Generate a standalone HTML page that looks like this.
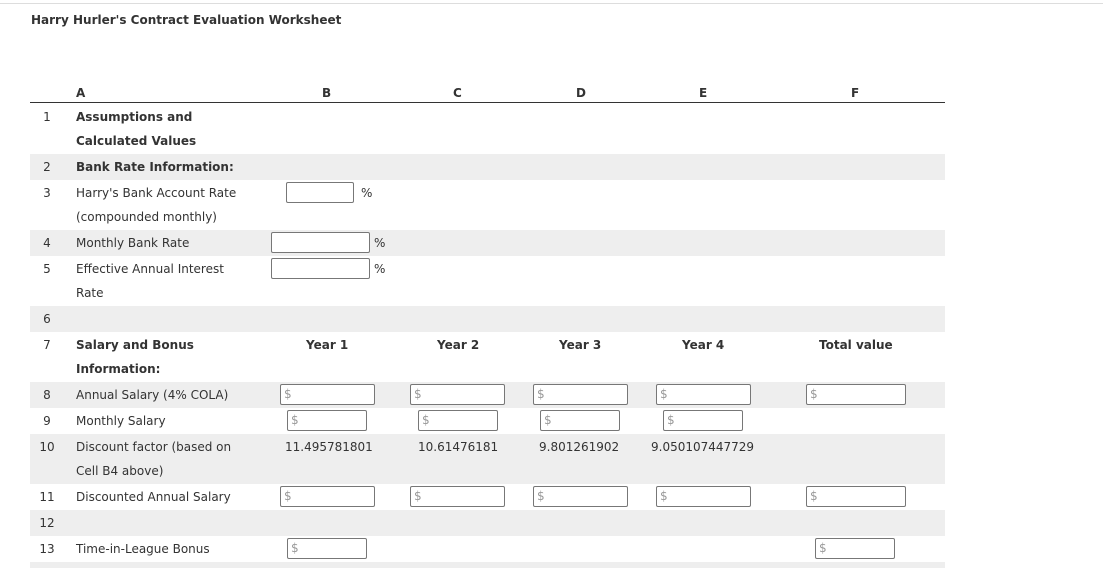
<!DOCTYPE html>
<html><head><style>
body{margin:0;width:1103px;height:567px;background:#fff;position:relative;overflow:hidden;font-family:"DejaVu Sans",Verdana,sans-serif;font-size:12px;color:#333}
.a{position:absolute;white-space:nowrap;margin-top:2px}
.b{font-weight:bold}
.bg{position:absolute;left:30px;width:915px;background:#eee}
.in{position:absolute;border:1px solid #777;border-radius:2px;background:#fff;box-sizing:border-box;height:21px}
.d{color:#999;font-size:12px;position:absolute;left:3px;top:2px}
.n{position:absolute;width:30px;left:32px;text-align:center;margin-top:2px}
</style></head><body>
<div style="position:absolute;left:0;top:3px;width:1103px;height:1px;background:#ddd"></div>
<div class="a b" style="left:31px;top:11px;font-size:12px">Harry Hurler's Contract Evaluation Worksheet</div>
<div class="bg" style="top:154px;height:26px"></div>
<div class="bg" style="top:230px;height:26px"></div>
<div class="bg" style="top:306px;height:26px"></div>
<div class="bg" style="top:382px;height:26px"></div>
<div class="bg" style="top:434px;height:50px"></div>
<div class="bg" style="top:510px;height:26px"></div>
<div class="bg" style="top:562px;height:6px"></div>
<div style="position:absolute;left:30px;top:102px;width:915px;height:1px;background:#333"></div>
<div class="a b" style="left:76px;top:84px;font-size:12px">A</div>
<div class="a b" style="left:322px;top:84px;font-size:12px">B</div>
<div class="a b" style="left:453px;top:84px;font-size:12px">C</div>
<div class="a b" style="left:576px;top:84px;font-size:12px">D</div>
<div class="a b" style="left:699px;top:84px;font-size:12px">E</div>
<div class="a b" style="left:851px;top:84px;font-size:12px">F</div>

<div class="n" style="top:108px">1</div><div class="a b" style="left:76px;top:108px">Assumptions and</div><div class="a b" style="left:76px;top:132px">Calculated Values</div>
<div class="n" style="top:158px">2</div><div class="a b" style="left:76px;top:158px">Bank Rate Information:</div>
<div class="n" style="top:184px">3</div><div class="a" style="left:76px;top:184px">Harry's Bank Account Rate</div><div class="a" style="left:76px;top:208px">(compounded monthly)</div>
<div class="in" style="left:286px;top:182px;width:68px"></div><div class="a" style="left:361px;top:184px">%</div>
<div class="n" style="top:234px">4</div><div class="a" style="left:76px;top:234px">Monthly Bank Rate</div>
<div class="in" style="left:271px;top:232px;width:99px"></div><div class="a" style="left:374px;top:234px">%</div>
<div class="n" style="top:260px">5</div><div class="a" style="left:76px;top:260px">Effective Annual Interest</div><div class="a" style="left:76px;top:284px">Rate</div>
<div class="in" style="left:271px;top:258px;width:99px"></div><div class="a" style="left:374px;top:260px">%</div>
<div class="n" style="top:310px">6</div>
<div class="n" style="top:336px">7</div><div class="a b" style="left:76px;top:336px">Salary and Bonus</div><div class="a b" style="left:76px;top:360px">Information:</div>
<div class="a b" style="left:306px;top:336px">Year 1</div><div class="a b" style="left:437px;top:336px">Year 2</div><div class="a b" style="left:559px;top:336px">Year 3</div><div class="a b" style="left:682px;top:336px">Year 4</div><div class="a b" style="left:819px;top:336px">Total value</div>
<div class="n" style="top:386px">8</div><div class="a" style="left:76px;top:386px">Annual Salary (4% COLA)</div>
<div class="in" style="left:280px;top:384px;width:95px"><span class="d">$</span></div>
<div class="in" style="left:410px;top:384px;width:95px"><span class="d">$</span></div>
<div class="in" style="left:533px;top:384px;width:95px"><span class="d">$</span></div>
<div class="in" style="left:656px;top:384px;width:95px"><span class="d">$</span></div>
<div class="in" style="left:806px;top:384px;width:100px"><span class="d">$</span></div>
<div class="n" style="top:412px">9</div><div class="a" style="left:76px;top:412px">Monthly Salary</div>
<div class="in" style="left:287px;top:410px;width:80px"><span class="d">$</span></div>
<div class="in" style="left:418px;top:410px;width:80px"><span class="d">$</span></div>
<div class="in" style="left:540px;top:410px;width:80px"><span class="d">$</span></div>
<div class="in" style="left:663px;top:410px;width:80px"><span class="d">$</span></div>
<div class="n" style="top:438px">10</div><div class="a" style="left:76px;top:438px">Discount factor (based on</div><div class="a" style="left:76px;top:462px">Cell B4 above)</div>
<div class="a" style="left:285px;top:438px">11.495781801</div><div class="a" style="left:418px;top:438px">10.61476181</div><div class="a" style="left:539px;top:438px">9.801261902</div><div class="a" style="left:651px;top:438px">9.050107447729</div>
<div class="n" style="top:488px">11</div><div class="a" style="left:76px;top:488px">Discounted Annual Salary</div>
<div class="in" style="left:280px;top:486px;width:95px"><span class="d">$</span></div>
<div class="in" style="left:410px;top:486px;width:95px"><span class="d">$</span></div>
<div class="in" style="left:533px;top:486px;width:95px"><span class="d">$</span></div>
<div class="in" style="left:656px;top:486px;width:95px"><span class="d">$</span></div>
<div class="in" style="left:806px;top:486px;width:100px"><span class="d">$</span></div>
<div class="n" style="top:514px">12</div>
<div class="n" style="top:540px">13</div><div class="a" style="left:76px;top:540px">Time-in-League Bonus</div>
<div class="in" style="left:287px;top:538px;width:80px"><span class="d">$</span></div>
<div class="in" style="left:815px;top:538px;width:80px"><span class="d">$</span></div>
</body></html>
